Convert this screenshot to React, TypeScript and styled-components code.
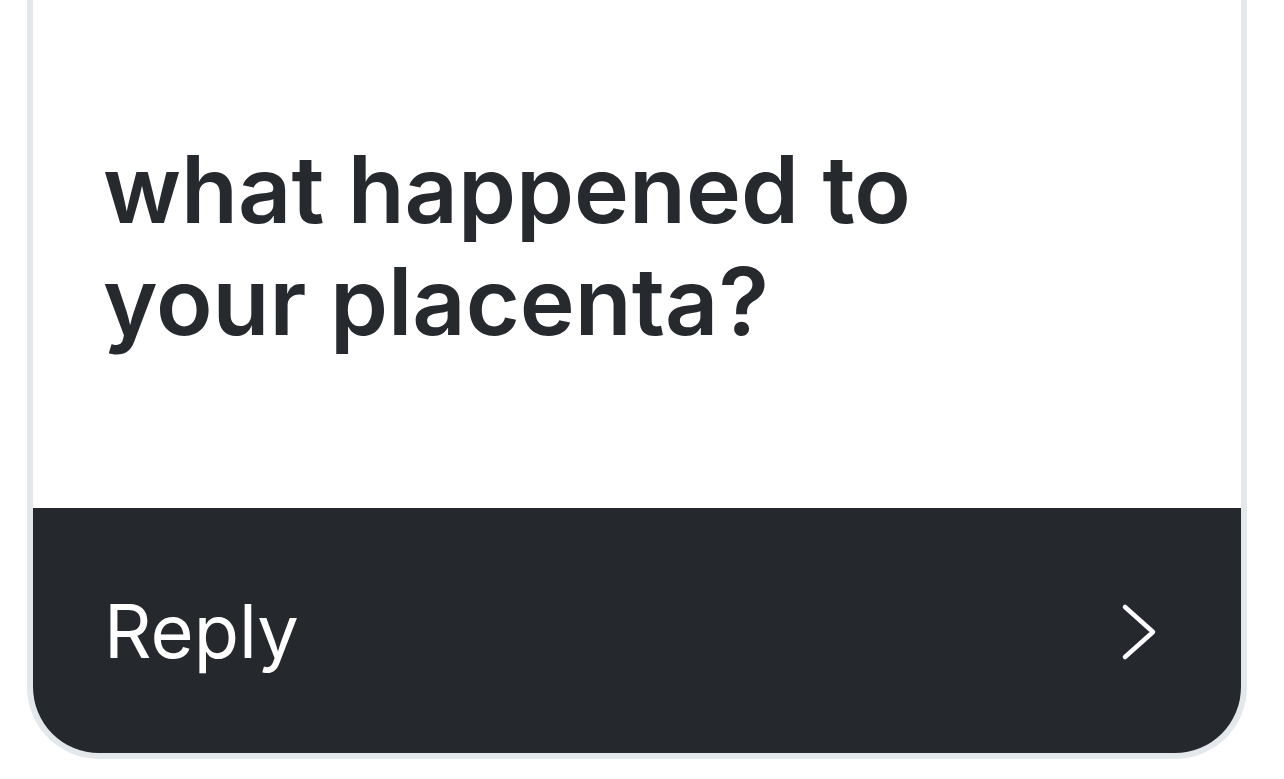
import React from "react";
import styled, { createGlobalStyle } from "styled-components";

const Global = createGlobalStyle`
  html, body { margin: 0; padding: 0; background: #ffffff; }
  body { font-family: Inter, "Noto Sans", "Liberation Sans", sans-serif; }
`;

const Page = styled.div`
  width: 1284px;
  height: 779px;
  overflow: hidden;
  padding: 0 37px 0 27px;
  box-sizing: border-box;
`;

const Card = styled.div`
  border: 6px solid #e3e8ed;
  border-top: none;
  border-radius: 0 0 72px 72px;
  overflow: hidden;
  display: flex;
  flex-direction: column;
`;

const Body = styled.div`
  height: 508px;
  box-sizing: border-box;
  display: flex;
  align-items: center;
  padding: 0 70px 18px;
  background: #ffffff;
`;

const Question = styled.h1`
  margin: 0;
  font-size: 93px;
  line-height: 112px;
  font-weight: 600;
  color: #262a2f;
`;

const Footer = styled.button`
  all: unset;
  height: 245px;
  background: #25292e;
  display: flex;
  align-items: center;
  justify-content: space-between;
  padding: 0 82px 0 71px;
  cursor: pointer;
`;

const ReplyLabel = styled.span`
  font-size: 74px;
  font-weight: 400;
  color: #ffffff;
`;

const Chevron = () => (
  <svg width="40" height="64" viewBox="0 0 40 64" fill="none">
    <path d="M6 8 L34 33 L6 58" stroke="#ffffff" strokeWidth="4.5" strokeLinecap="round" strokeLinejoin="round" />
  </svg>
);

export default function App() {
  return (
    <>
      <Global />
      <Page>
        <Card>
          <Body>
            <Question>
              what happened to
              <br />
              your placenta?
            </Question>
          </Body>
          <Footer>
            <ReplyLabel>Reply</ReplyLabel>
            <Chevron />
          </Footer>
        </Card>
      </Page>
    </>
  );
}
